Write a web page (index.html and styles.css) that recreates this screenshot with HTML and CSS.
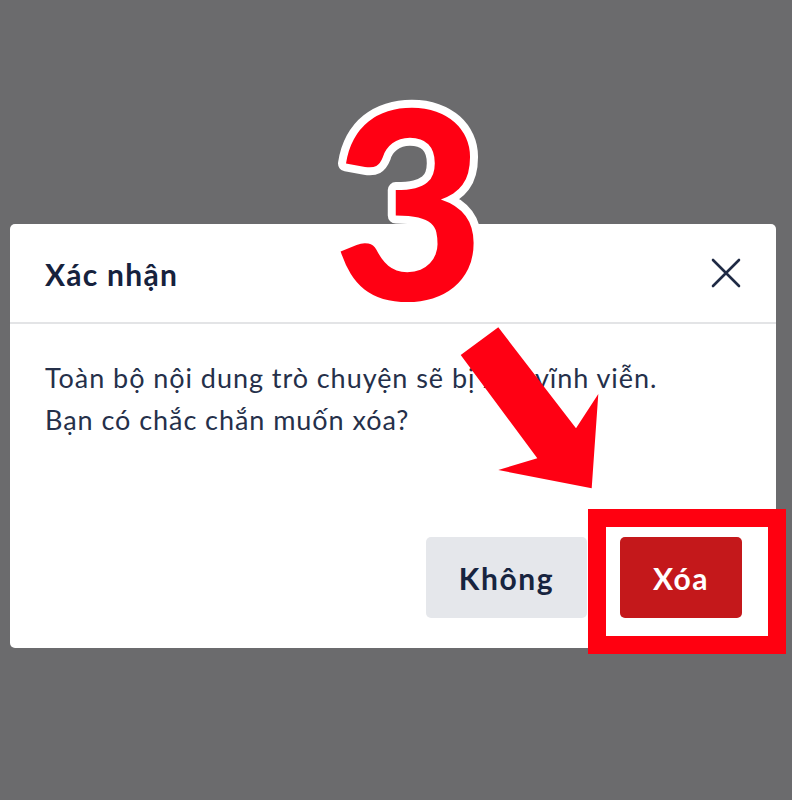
FILE: index.html
```html
<!DOCTYPE html>
<html lang="vi">
<head>
<meta charset="utf-8">
<title>Xác nhận</title>
<link rel="stylesheet" href="styles.css">
</head>
<body>
<div class="page">
  <div class="dialog">
    <div class="dialog-header">
      <h2 class="dialog-title">Xác nhận</h2>
      <button class="close-btn" aria-label="Đóng">
        <svg width="32" height="32" viewBox="0 0 32 32"><path d="M3 3 L29 29 M29 3 L3 29" stroke="#1f2a44" stroke-width="2.6" stroke-linecap="round" fill="none"/></svg>
      </button>
    </div>
    <div class="dialog-body">
      <p class="msg">Toàn bộ nội dung trò chuyện sẽ bị xóa vĩnh viễn.<br>Bạn có chắc chắn muốn xóa?</p>
    </div>
    <div class="dialog-footer">
      <button class="btn btn-cancel">Không</button>
      <button class="btn btn-danger">Xóa</button>
    </div>
  </div>

  <svg class="step-num" width="260" height="300" viewBox="0 0 260 300">
    <text x="130" y="235" text-anchor="middle" class="step-text">3</text>
  </svg>

  <svg class="arrow" width="792" height="800" viewBox="0 0 792 800">
    <polygon points="460.7,355 498.3,327.3 576,428.3 598.3,394 591.7,488.3 498.3,470 537.3,458.3" fill="#ff0013"/>
  </svg>

  <div class="highlight"></div>
</div>
</body>
</html>
```

FILE: styles.css
```css
html, body {
  margin: 0;
  padding: 0;
}
body {
  background: #6b6b6d;
  font-family: Lato, "Noto Sans", sans-serif;
}
.page {
  position: relative;
  width: 792px;
  height: 800px;
  overflow: hidden;
  padding-top: 224px;
  box-sizing: border-box;
}
.dialog {
  margin-left: 10px;
  width: 766px;
  height: 424px;
  background: #ffffff;
  border-radius: 5px;
  display: flex;
  flex-direction: column;
}
.dialog-header {
  height: 98px;
  border-bottom: 2px solid #e3e4e6;
  display: flex;
  align-items: center;
  justify-content: space-between;
  padding: 0 34px 0 35px;
  box-sizing: content-box;
}
.dialog-title {
  margin: 0;
  font-size: 30px;
  font-weight: 700;
  color: #16223d;
  letter-spacing: 1.3px;
  padding-top: 2px;
}
.close-btn {
  border: 0;
  background: none;
  padding: 0;
  width: 32px;
  height: 32px;
  display: flex;
  cursor: pointer;
}
.dialog-body {
  padding: 33px 35px 0 35px;
  flex: 1;
}
.msg {
  margin: 0;
  font-size: 27px;
  line-height: 42px;
  letter-spacing: 0.95px;
  color: #25304a;
}
.dialog-footer {
  display: flex;
  justify-content: flex-end;
  gap: 33px;
  padding: 0 34px 30px 0;
}
.btn {
  height: 81px;
  border: 0;
  border-radius: 5px;
  font-family: Lato, "Noto Sans", sans-serif;
  font-size: 30px;
  font-weight: 700;
  letter-spacing: 1.6px;
  cursor: pointer;
}
.btn-cancel {
  width: 161px;
  background: #e5e7eb;
  color: #17243f;
}
.btn-danger {
  width: 122px;
  background: #c4181b;
  color: #ffffff;
}
.step-num {
  position: absolute;
  left: 279px;
  top: 65px;
}
.step-text {
  font-family: Lato, sans-serif;
  font-weight: 900;
  font-size: 262px;
  fill: #ff0013;
  stroke: #ffffff;
  stroke-width: 16px;
  stroke-linejoin: round;
  paint-order: stroke fill;
}
.arrow {
  position: absolute;
  left: 0;
  top: 0;
}
.highlight {
  position: absolute;
  left: 588px;
  top: 509px;
  width: 198px;
  height: 145px;
  border: 18px solid #ff0010;
  box-sizing: border-box;
}
```
